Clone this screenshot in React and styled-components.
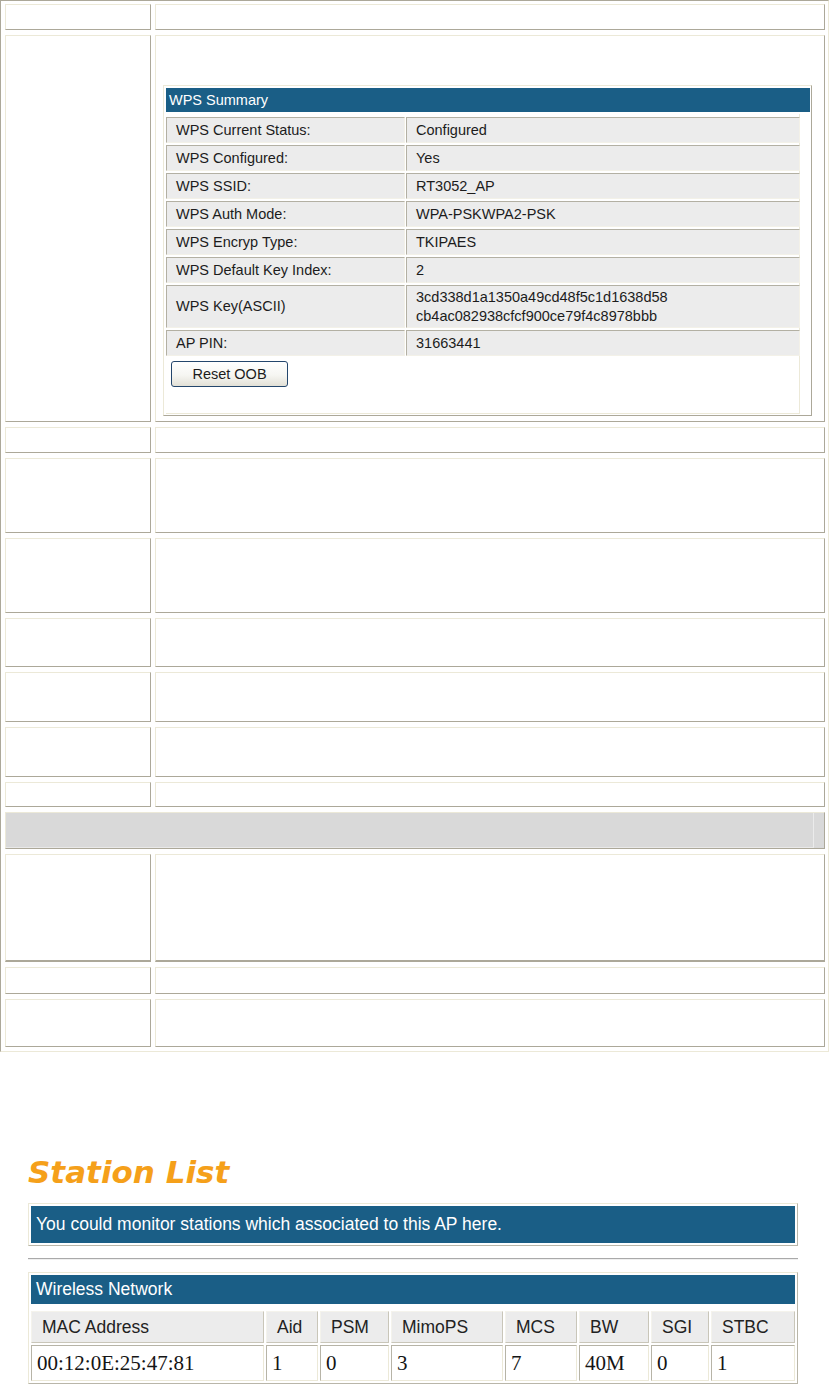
import React from "react";
import styled, { createGlobalStyle } from "styled-components";

const GlobalStyle = createGlobalStyle`
  html, body { margin: 0; padding: 0; background: #ffffff; }
  body { font-family: "Liberation Sans", Arial, sans-serif; color: #1a1a1a; }
  * { box-sizing: border-box; }
`;

const LIGHT = "#ece9d8";
const DARK = "#aca899";
const BLUE = "#1a5e86";

const Page = styled.div`
  width: 829px;
`;

const MainTable = styled.div`
  display: grid;
  grid-template-columns: 146px 670px;
  grid-template-rows: ${(p) => p.$rows};
  column-gap: 4px;
  row-gap: 5px;
  width: 829px;
  padding: 3px 3px 4px 4px;
  border: 1px solid;
  border-color: ${DARK} ${LIGHT} ${LIGHT} ${DARK};
`;

const Cell = styled.div`
  border: 1px solid;
  border-color: ${LIGHT} ${DARK} ${DARK} ${LIGHT};
  border-bottom-width: ${(p) => (p.$thick ? 2 : 1)}px;
  background: #ffffff;
  min-width: 0;
`;

const ContentCell = styled(Cell)`
  padding: 49px 12px 0 7px;
`;

const SectionRow = styled.div`
  grid-column: 1 / -1;
  display: flex;
  background: #d9d9d9;
  border: 1px solid;
  border-color: ${LIGHT} ${DARK} ${DARK} ${LIGHT};
`;

const SectionInner = styled.div`
  flex: 1;
  margin-right: 10px;
  border-right: 1px solid #ebebeb;
  border-bottom: 1px solid #e9e9e9;
`;

const WpsFrame = styled.div`
  width: 649px;
  padding: 2px 1px 1px 2px;
  border: 1px solid;
  border-color: ${LIGHT} ${DARK} ${DARK} ${LIGHT};
`;

const TitleBar = styled.div`
  height: ${(p) => p.$h}px;
  background: ${BLUE};
  color: #ffffff;
  font-size: ${(p) => p.$size}px;
  display: flex;
  align-items: center;
  padding-left: ${(p) => p.$pad}px;
  white-space: nowrap;
`;

const WpsBody = styled.div`
  width: 634px;
  margin-top: 2px;
  padding-top: 3px;
  border-right: 1px solid ${LIGHT};
  border-bottom: 1px solid ${LIGHT};
`;

const WpsGrid = styled.div`
  display: grid;
  grid-template-columns: 239px 394px;
  column-gap: 1px;
  row-gap: 2px;
`;

const WpsCell = styled.div`
  height: ${(p) => p.$h}px;
  background: #ececec;
  border: 1px solid;
  border-color: #b3b0a3 #f3f1e8 #f3f1e8 #b3b0a3;
  padding-left: 9px;
  display: flex;
  flex-direction: column;
  justify-content: center;
  font-size: 14.5px;
  line-height: 19px;
  color: #1c1c1c;
  white-space: nowrap;
`;

const ButtonArea = styled.div`
  padding: 5px 0 26px 5px;
`;

const OobButton = styled.button`
  width: 117px;
  height: 26px;
  border: 1px solid #24466c;
  border-radius: 3px;
  background: linear-gradient(#ffffff 0%, #f6f6f2 55%, #e2e0d6 100%);
  font-family: "Liberation Sans", Arial, sans-serif;
  font-size: 14.5px;
  color: #1c1c1c;
  padding: 0;
  display: block;
`;

const StationSection = styled.section`
  margin: 102px 0 0 28px;
  width: 770px;
`;

const StationTitle = styled.h1`
  margin: 0;
  font-family: "DejaVu Sans", Verdana, sans-serif;
  font-weight: bold;
  font-style: italic;
  font-size: 31px;
  line-height: 36px;
  color: #f5a01a;
`;

const Frame = styled.div`
  margin-top: ${(p) => p.$mt}px;
  padding: 2px;
  border: 1px solid;
  border-color: ${LIGHT} #b9b6a9 #b9b6a9 ${LIGHT};
`;

const Divider = styled.hr`
  margin: 12px 0 0;
  height: 0;
  border: 0;
  border-top: 1px solid #a9a9a9;
  border-bottom: 1px solid #efefef;
`;

const StationGrid = styled.div`
  margin-top: 7px;
  display: grid;
  grid-template-columns: 233px 52px 69px 112px 72px 70px 58px 84px;
  grid-template-rows: 32px 36px;
  gap: 2px;
`;

const HeadCell = styled.div`
  background: #ececec;
  border: 1px solid;
  border-color: #f4f3ec #c9c6b9 #c9c6b9 #f4f3ec;
  padding-left: 10px;
  display: flex;
  align-items: center;
  font-size: 17.5px;
  color: #222222;
  white-space: nowrap;
`;

const DataCell = styled.div`
  background: #ffffff;
  border: 1px solid;
  border-color: #b7b4a7 ${LIGHT} ${LIGHT} #b7b4a7;
  padding-left: 5px;
  display: flex;
  align-items: center;
  font-family: "Liberation Serif", "Times New Roman", serif;
  font-size: 21px;
  color: #151515;
  white-space: nowrap;
`;

const rowHeights = [26, 387, 26, 75, 75, 49, 50, 50, 25, 37, 108, 27, 48];

const wpsRows = [
  ["WPS Current Status:", ["Configured"]],
  ["WPS Configured:", ["Yes"]],
  ["WPS SSID:", ["RT3052_AP"]],
  ["WPS Auth Mode:", ["WPA-PSKWPA2-PSK"]],
  ["WPS Encryp Type:", ["TKIPAES"]],
  ["WPS Default Key Index:", ["2"]],
  ["WPS Key(ASCII)", ["3cd338d1a1350a49cd48f5c1d1638d58", "cb4ac082938cfcf900ce79f4c8978bbb"]],
  ["AP PIN:", ["31663441"]],
];

const stationHeads = ["MAC Address", "Aid", "PSM", "MimoPS", "MCS", "BW", "SGI", "STBC"];
const stationData = ["00:12:0E:25:47:81", "1", "0", "3", "7", "40M", "0", "1"];

function WpsSummary() {
  return (
    <WpsFrame>
      <TitleBar $h={24} $size={14.5} $pad={3}>WPS Summary</TitleBar>
      <WpsBody>
        <WpsGrid>
          {wpsRows.map(([label, values]) => {
            const h = values.length > 1 ? 43 : 26;
            return (
              <React.Fragment key={label}>
                <WpsCell $h={h}>{label}</WpsCell>
                <WpsCell $h={h}>
                  {values.map((v) => (
                    <span key={v}>{v}</span>
                  ))}
                </WpsCell>
              </React.Fragment>
            );
          })}
        </WpsGrid>
        <ButtonArea>
          <OobButton type="button">Reset OOB</OobButton>
        </ButtonArea>
      </WpsBody>
    </WpsFrame>
  );
}

export default function App() {
  const rows = rowHeights.map((h) => `${h}px`).join(" ");
  return (
    <Page>
      <GlobalStyle />
      <MainTable $rows={rows}>
        {rowHeights.map((h, i) => {
          if (i === 9) {
            return (
              <SectionRow key={i}>
                <SectionInner />
              </SectionRow>
            );
          }
          if (i === 1) {
            return (
              <React.Fragment key={i}>
                <Cell />
                <ContentCell>
                  <WpsSummary />
                </ContentCell>
              </React.Fragment>
            );
          }
          return (
            <React.Fragment key={i}>
              <Cell $thick={i === 10} />
              <Cell $thick={i === 10} />
            </React.Fragment>
          );
        })}
      </MainTable>

      <StationSection>
        <StationTitle>Station List</StationTitle>
        <Frame $mt={13}>
          <TitleBar $h={37} $size={17.5} $pad={5}>
            You could monitor stations which associated to this AP here.
          </TitleBar>
        </Frame>
        <Divider />
        <Frame $mt={12}>
          <TitleBar $h={29} $size={17.5} $pad={5}>Wireless Network</TitleBar>
          <StationGrid>
            {stationHeads.map((h) => (
              <HeadCell key={h}>{h}</HeadCell>
            ))}
            {stationData.map((d, i) => (
              <DataCell key={i}>{d}</DataCell>
            ))}
          </StationGrid>
        </Frame>
      </StationSection>
    </Page>
  );
}
